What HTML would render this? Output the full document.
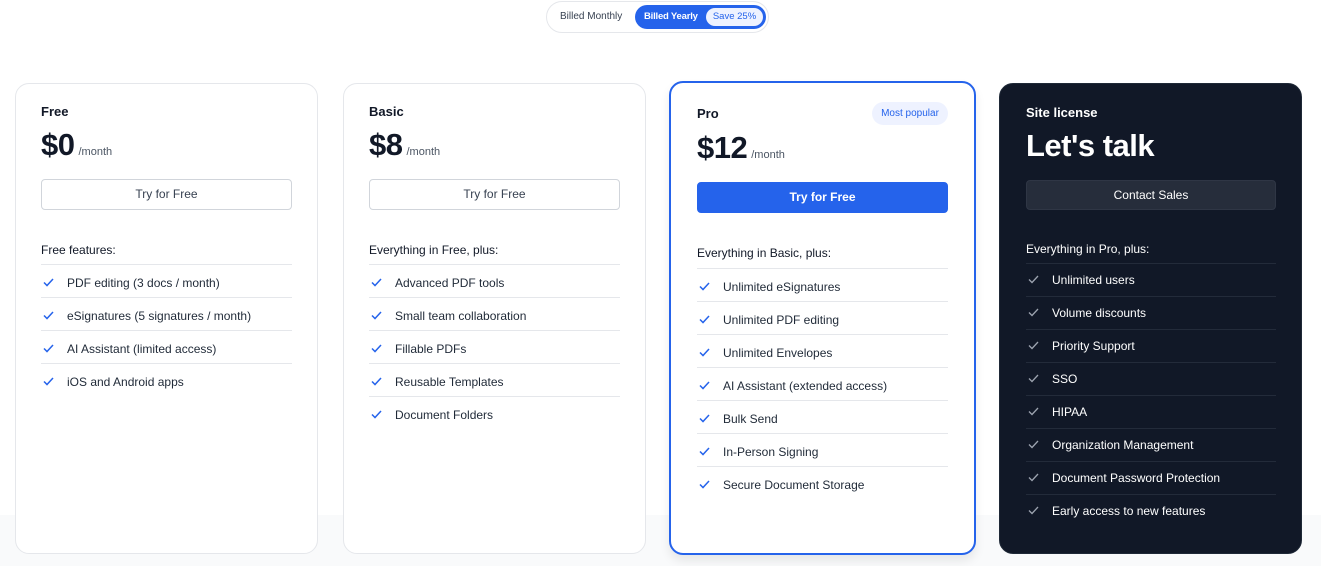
<!DOCTYPE html>
<html><head><meta charset="utf-8"><style>
*{box-sizing:border-box;margin:0;padding:0}
body{width:1321px;height:566px;position:relative;background:#fff;font-family:"Liberation Sans",Arial,sans-serif;color:#111827;overflow:hidden}
.bg{position:absolute;left:0;top:515px;width:1321px;height:51px;background:#f9fafb}
.tog{position:absolute;left:546px;top:1px;width:223px;height:32px;border:1px solid #e5e7eb;border-radius:16px;background:#fff}
.tog .m{position:absolute;left:13px;top:0;line-height:30px;font-size:10px;color:#374151}
.tog .y{position:absolute;left:88px;top:3px;width:131px;height:24px;border-radius:12px;background:#2563eb}
.tog .y span{position:absolute;left:9px;line-height:24px;font-size:9.5px;color:#fff;font-weight:bold;letter-spacing:-0.2px}
.tog .y b{position:absolute;right:3px;top:3px;height:18px;width:57px;border-radius:9px;background:#eef2ff;color:#2563eb;font-size:9.5px;font-weight:normal;line-height:18px;text-align:center}
.card{position:absolute;border:1px solid #e5e7eb;border-radius:14px;background:#fff}
.card>*{position:absolute}
.t{font-size:13px;font-weight:bold;line-height:16px}
.p{font-size:31px;font-weight:bold;line-height:34px;letter-spacing:-0.5px}
.p small{font-size:11px;font-weight:normal;color:#4b5563;letter-spacing:0;margin-left:4px}
.btn{height:31px;border:1px solid #d1d5db;border-radius:4px;font-size:12px;line-height:29px;text-align:center;color:#374151}
.h{font-size:12px;line-height:16px;color:#111827}
ul{list-style:none;border-top:1px solid #e5e7eb}
li{height:33px;border-bottom:1px solid #e5e7eb;font-size:12px;line-height:36px;padding-left:26px;position:relative;color:#1f2937}
li:last-child{border-bottom:none}
li svg{position:absolute;left:2px;top:13px}
.dark{background:#111827;border-color:#1f2937}
.dark .t,.dark .p,.dark .h{color:#fff}
.dark .btn{background:#262d3b;border-color:#2f3645;color:#fff}
.dark ul{border-color:#232b3a}
.dark li{border-color:#232b3a;color:#fff;line-height:32px}
.dark li svg{top:11px}
</style></head><body>
<div class="bg"></div>
<div class="tog"><span class="m">Billed Monthly</span><div class="y"><span>Billed Yearly</span><b>Save 25%</b></div></div>

<div class="card" style="left:15px;top:83px;width:303px;height:471px">
<div class="t" style="left:25px;top:20px">Free</div>
<div class="p" style="left:25px;top:44px">$0<small>/month</small></div>
<div class="btn" style="left:25px;top:95px;width:251px">Try for Free</div>
<div class="h" style="left:25px;top:158px">Free features:</div>
<ul style="left:25px;top:180px;width:251px">
<li><svg width="11" height="9" viewBox="0 0 11 9"><path d="M1 4.5l3 3L10 1" fill="none" stroke="#2563eb" stroke-width="1.5"/></svg>PDF editing (3 docs / month)</li>
<li><svg width="11" height="9" viewBox="0 0 11 9"><path d="M1 4.5l3 3L10 1" fill="none" stroke="#2563eb" stroke-width="1.5"/></svg>eSignatures (5 signatures / month)</li>
<li><svg width="11" height="9" viewBox="0 0 11 9"><path d="M1 4.5l3 3L10 1" fill="none" stroke="#2563eb" stroke-width="1.5"/></svg>AI Assistant (limited access)</li>
<li><svg width="11" height="9" viewBox="0 0 11 9"><path d="M1 4.5l3 3L10 1" fill="none" stroke="#2563eb" stroke-width="1.5"/></svg>iOS and Android apps</li>
</ul></div>

<div class="card" style="left:343px;top:83px;width:303px;height:471px">
<div class="t" style="left:25px;top:20px">Basic</div>
<div class="p" style="left:25px;top:44px">$8<small>/month</small></div>
<div class="btn" style="left:25px;top:95px;width:251px">Try for Free</div>
<div class="h" style="left:25px;top:158px">Everything in Free, plus:</div>
<ul style="left:25px;top:180px;width:251px">
<li><svg width="11" height="9" viewBox="0 0 11 9"><path d="M1 4.5l3 3L10 1" fill="none" stroke="#2563eb" stroke-width="1.5"/></svg>Advanced PDF tools</li>
<li><svg width="11" height="9" viewBox="0 0 11 9"><path d="M1 4.5l3 3L10 1" fill="none" stroke="#2563eb" stroke-width="1.5"/></svg>Small team collaboration</li>
<li><svg width="11" height="9" viewBox="0 0 11 9"><path d="M1 4.5l3 3L10 1" fill="none" stroke="#2563eb" stroke-width="1.5"/></svg>Fillable PDFs</li>
<li><svg width="11" height="9" viewBox="0 0 11 9"><path d="M1 4.5l3 3L10 1" fill="none" stroke="#2563eb" stroke-width="1.5"/></svg>Reusable Templates</li>
<li><svg width="11" height="9" viewBox="0 0 11 9"><path d="M1 4.5l3 3L10 1" fill="none" stroke="#2563eb" stroke-width="1.5"/></svg>Document Folders</li>
</ul></div>

<div class="card" style="left:669px;top:81px;width:307px;height:474px;border:2px solid #2563eb;box-shadow:0 6px 10px rgba(0,0,0,0.08)">
<div class="t" style="left:26px;top:23px">Pro</div>
<div style="left:201px;top:19px;width:76px;height:23px;border-radius:12px;background:#eef2ff;color:#2563eb;font-size:10px;line-height:23px;text-align:center">Most popular</div>
<div class="p" style="left:26px;top:48px">$12<small>/month</small></div>
<div class="btn" style="left:26px;top:99px;width:251px;background:#2563eb;border-color:#2563eb;color:#fff;font-weight:bold">Try for Free</div>
<div class="h" style="left:26px;top:162px">Everything in Basic, plus:</div>
<ul style="left:26px;top:185px;width:251px">
<li><svg width="11" height="9" viewBox="0 0 11 9"><path d="M1 4.5l3 3L10 1" fill="none" stroke="#2563eb" stroke-width="1.5"/></svg>Unlimited eSignatures</li>
<li><svg width="11" height="9" viewBox="0 0 11 9"><path d="M1 4.5l3 3L10 1" fill="none" stroke="#2563eb" stroke-width="1.5"/></svg>Unlimited PDF editing</li>
<li><svg width="11" height="9" viewBox="0 0 11 9"><path d="M1 4.5l3 3L10 1" fill="none" stroke="#2563eb" stroke-width="1.5"/></svg>Unlimited Envelopes</li>
<li><svg width="11" height="9" viewBox="0 0 11 9"><path d="M1 4.5l3 3L10 1" fill="none" stroke="#2563eb" stroke-width="1.5"/></svg>AI Assistant (extended access)</li>
<li><svg width="11" height="9" viewBox="0 0 11 9"><path d="M1 4.5l3 3L10 1" fill="none" stroke="#2563eb" stroke-width="1.5"/></svg>Bulk Send</li>
<li><svg width="11" height="9" viewBox="0 0 11 9"><path d="M1 4.5l3 3L10 1" fill="none" stroke="#2563eb" stroke-width="1.5"/></svg>In-Person Signing</li>
<li><svg width="11" height="9" viewBox="0 0 11 9"><path d="M1 4.5l3 3L10 1" fill="none" stroke="#2563eb" stroke-width="1.5"/></svg>Secure Document Storage</li>
</ul></div>

<div class="card dark" style="left:999px;top:83px;width:303px;height:471px">
<div class="t" style="left:26px;top:21px">Site license</div>
<div class="p" style="left:26px;top:45px">Let's talk</div>
<div class="btn" style="left:26px;top:96px;width:250px;height:30px;line-height:28px">Contact Sales</div>
<div class="h" style="left:26px;top:157px">Everything in Pro, plus:</div>
<ul style="left:26px;top:179px;width:250px">
<li><svg width="11" height="9" viewBox="0 0 11 9"><path d="M1 4.5l3 3L10 1" fill="none" stroke="#9ca3af" stroke-width="1.3"/></svg>Unlimited users</li>
<li><svg width="11" height="9" viewBox="0 0 11 9"><path d="M1 4.5l3 3L10 1" fill="none" stroke="#9ca3af" stroke-width="1.3"/></svg>Volume discounts</li>
<li><svg width="11" height="9" viewBox="0 0 11 9"><path d="M1 4.5l3 3L10 1" fill="none" stroke="#9ca3af" stroke-width="1.3"/></svg>Priority Support</li>
<li><svg width="11" height="9" viewBox="0 0 11 9"><path d="M1 4.5l3 3L10 1" fill="none" stroke="#9ca3af" stroke-width="1.3"/></svg>SSO</li>
<li><svg width="11" height="9" viewBox="0 0 11 9"><path d="M1 4.5l3 3L10 1" fill="none" stroke="#9ca3af" stroke-width="1.3"/></svg>HIPAA</li>
<li><svg width="11" height="9" viewBox="0 0 11 9"><path d="M1 4.5l3 3L10 1" fill="none" stroke="#9ca3af" stroke-width="1.3"/></svg>Organization Management</li>
<li><svg width="11" height="9" viewBox="0 0 11 9"><path d="M1 4.5l3 3L10 1" fill="none" stroke="#9ca3af" stroke-width="1.3"/></svg>Document Password Protection</li>
<li><svg width="11" height="9" viewBox="0 0 11 9"><path d="M1 4.5l3 3L10 1" fill="none" stroke="#9ca3af" stroke-width="1.3"/></svg>Early access to new features</li>
</ul></div>
</body></html>
